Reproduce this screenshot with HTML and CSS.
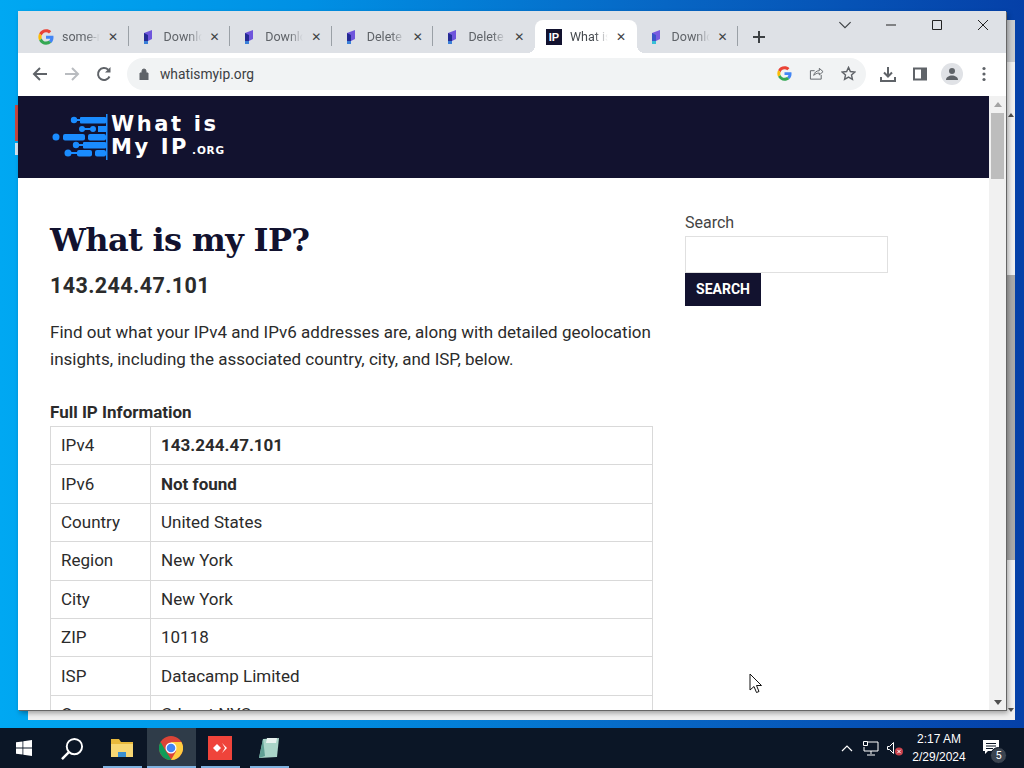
FILE: index.html
```html
<!DOCTYPE html>
<html lang="en">
<head>
    <meta charset="UTF-8">
    <title>What is my IP?</title>
    <link rel="stylesheet" href="styles.css">
</head>
<body>
    <div class="desktop">
        <div class="behind-sliver"></div>
        <div class="behind-window">
            <div class="behind-top"></div>
            <span class="behind-arrow up"></span>
            <div class="behind-thumb"></div>
            <span class="behind-arrow down"></span>
        </div>

        <div class="browser">
            <div class="tabstrip">
                <div class="tab">
                    <svg class="favicon" viewBox="0 0 48 48"><path fill="#ea4335" d="M24 10c3.500 0 6.600 1.200 9 3.500l6.700-6.700C35.600 3 30.200 1 24 1 15 1 7.300 6.100 3.500 13.600l7.800 6C13.200 14.100 18.100 10 24 10z"/><path fill="#4285f4" d="M46.500 24.500c0-1.600-.2-3.100-.4-4.500H24v9h12.700c-.6 2.900-2.200 5.400-4.700 7l7.600 5.900c4.400-4.100 6.900-10.100 6.900-17.400z"/><path fill="#fbbc05" d="M11.300 28.400C10.800 27 10.500 25.500 10.500 24s.3-3 .8-4.400l-7.800-6C1.900 16.800 1 20.300 1 24s.9 7.200 2.500 10.400l7.800-6z"/><path fill="#34a853" d="M24 47c6.200 0 11.500-2 15.600-5.600L32 35.500c-2.100 1.400-4.800 2.300-8 2.300-5.900 0-10.800-4-12.700-9.400l-7.800 6C7.300 41.900 15 47 24 47z"/></svg>
                    <span class="tab-title">some-r</span>
                    <span class="tab-close">✕</span>
                </div>
                <div class="tab">
                    <svg class="favicon" viewBox="0 0 16 16"><path fill="#6f55dc" d="M4 4l8-3v9l-4 2v3H4z"/><path fill="#252a94" d="M4 4l4 2v6H4z"/><path fill="#3a7fd8" d="M4 12h4v3H4z"/></svg>
                    <span class="tab-title">Downlo</span>
                    <span class="tab-close">✕</span>
                </div>
                <div class="tab">
                    <svg class="favicon" viewBox="0 0 16 16"><path fill="#6f55dc" d="M4 4l8-3v9l-4 2v3H4z"/><path fill="#252a94" d="M4 4l4 2v6H4z"/><path fill="#3a7fd8" d="M4 12h4v3H4z"/></svg>
                    <span class="tab-title">Downlo</span>
                    <span class="tab-close">✕</span>
                </div>
                <div class="tab">
                    <svg class="favicon" viewBox="0 0 16 16"><path fill="#6f55dc" d="M4 4l8-3v9l-4 2v3H4z"/><path fill="#252a94" d="M4 4l4 2v6H4z"/><path fill="#3a7fd8" d="M4 12h4v3H4z"/></svg>
                    <span class="tab-title">Delete</span>
                    <span class="tab-close">✕</span>
                </div>
                <div class="tab no-sep">
                    <svg class="favicon" viewBox="0 0 16 16"><path fill="#6f55dc" d="M4 4l8-3v9l-4 2v3H4z"/><path fill="#252a94" d="M4 4l4 2v6H4z"/><path fill="#3a7fd8" d="M4 12h4v3H4z"/></svg>
                    <span class="tab-title">Delete</span>
                    <span class="tab-close">✕</span>
                </div>
                <div class="tab active">
                    <span class="ip-favicon">IP</span>
                    <span class="tab-title">What is</span>
                    <span class="tab-close">✕</span>
                </div>
                <div class="tab">
                    <svg class="favicon" viewBox="0 0 16 16"><path fill="#7a5be0" d="M4 4l8-3v9l-4 2v3H4z"/><path fill="#3a55c8" d="M4 4l4 2v6H4z"/><path fill="#38c0d8" d="M4 12h4v3H4z"/></svg>
                    <span class="tab-title">Downlo</span>
                    <span class="tab-close">✕</span>
                </div>
                <svg class="new-tab" viewBox="0 0 14 14"><path d="M7 1v12M1 7h12" stroke="#3c4043" stroke-width="2" fill="none"/></svg>
                <div class="window-controls">
                    <svg class="tab-search" viewBox="0 0 12 8"><path d="M1 1l5 5 5-5" stroke="#3c4043" fill="none"/></svg>
                    <svg class="win-btn" viewBox="0 0 12 12"><path d="M1 6h10" stroke="#222" fill="none"/></svg>
                    <svg class="win-btn" viewBox="0 0 12 12"><path d="M1.500 1.500h9v9h-9z" stroke="#222" fill="none"/></svg>
                    <svg class="win-btn" viewBox="0 0 12 12"><path d="M1 1l10 10M11 1L1 11" stroke="#222" fill="none"/></svg>
                </div>
            </div>

            <div class="toolbar">
                <svg class="tool-icon" viewBox="0 0 16 16"><path d="M15 8H2M8 2L2 8l6 6" stroke="#5f6368" stroke-width="2" fill="none"/></svg>
                <svg class="tool-icon" viewBox="0 0 16 16"><path d="M1 8h13M8 2l6 6-6 6" stroke="#b9bcc0" stroke-width="2" fill="none"/></svg>
                <svg class="tool-icon" viewBox="0 0 16 16"><path d="M13.500 10.500A6 6 0 1 1 12.200 3.700" stroke="#5f6368" stroke-width="2" fill="none"/><path d="M14.500 1v5.500H9z" fill="#5f6368"/></svg>
                <div class="omnibox">
                    <svg class="lock" viewBox="0 0 10 12"><path d="M1 5h8v7H1zM3 5V3a2 2 0 0 1 4 0v2" fill="#5f6368" stroke="#5f6368"/></svg>
                    <span class="url">whatismyip.org</span>
                    <svg class="omni-icon" viewBox="0 0 48 48"><path fill="#ea4335" d="M24 10c3.500 0 6.600 1.200 9 3.500l6.700-6.700C35.600 3 30.200 1 24 1 15 1 7.300 6.100 3.500 13.600l7.800 6C13.200 14.100 18.100 10 24 10z"/><path fill="#4285f4" d="M46.500 24.500c0-1.600-.2-3.100-.4-4.500H24v9h12.700c-.6 2.900-2.200 5.400-4.700 7l7.600 5.900c4.400-4.100 6.900-10.100 6.900-17.400z"/><path fill="#fbbc05" d="M11.300 28.400C10.800 27 10.500 25.500 10.500 24s.3-3 .8-4.400l-7.800-6C1.900 16.800 1 20.300 1 24s.9 7.200 2.500 10.400l7.800-6z"/><path fill="#34a853" d="M24 47c6.200 0 11.500-2 15.600-5.600L32 35.500c-2.100 1.400-4.800 2.300-8 2.300-5.900 0-10.800-4-12.700-9.400l-7.800 6C7.300 41.900 15 47 24 47z"/></svg>
                    <svg class="omni-icon" viewBox="0 0 16 16"><path d="M13 9.500V14H1.500V5H6M5 10c.5-3 3-5 6-5V2.500L15 6l-4 3.500V7.500C8.500 7.500 6.500 8.500 5 10z" stroke="#5f6368" fill="none"/></svg>
                    <svg class="omni-icon" viewBox="0 0 16 16"><path d="M8 1.500l2 4.400 4.800.5-3.600 3.200 1 4.700L8 11.900l-4.200 2.400 1-4.700L1.200 6.400 6 5.900z" stroke="#5f6368" stroke-width="1.500" fill="none"/></svg>
                </div>
                <div class="tool-right">
                    <svg class="tool-icon" viewBox="0 0 16 16"><path d="M8 1v9M4 6.500L8 10.500l4-4M1 11v4h14v-4" stroke="#5f6368" stroke-width="2" fill="none"/></svg>
                    <svg class="tool-icon" viewBox="0 0 16 16"><path d="M2 2.500h12v11H2z" stroke="#5f6368" stroke-width="2" fill="none"/><path d="M9 2h5v12H9z" fill="#5f6368"/></svg>
                    <div class="avatar">
                        <svg viewBox="0 0 16 16"><circle cx="8" cy="5" r="3" fill="#5f6368"/><path d="M2 14c0-3 3-4.500 6-4.500s6 1.500 6 4.500z" fill="#5f6368"/></svg>
                    </div>
                    <svg class="tool-icon" viewBox="0 0 16 16"><circle cx="8" cy="2.500" r="1.600" fill="#5f6368"/><circle cx="8" cy="8" r="1.600" fill="#5f6368"/><circle cx="8" cy="13.500" r="1.600" fill="#5f6368"/></svg>
                </div>
            </div>

            <div class="viewport">
                <div class="page">
                    <header class="site-header">
                        <svg class="logo-mark" viewBox="0 0 56 48">
                            <g fill="#1a8cff">
                                <circle cx="22" cy="7" r="3.200"/><rect x="22" y="6" width="8" height="2"/><rect x="28" y="4" width="26" height="6.500" rx="1"/>
                                <circle cx="30" cy="16" r="3"/><circle cx="41" cy="16" r="3"/><rect x="30" y="15" width="11" height="2"/><rect x="46" y="13" width="8" height="6"/>
                                <circle cx="4" cy="24" r="3.500"/><rect x="11" y="21" width="22" height="6.500" rx="2"/><rect x="36" y="21" width="18" height="6.500" rx="2"/>
                                <circle cx="24" cy="32" r="3.200"/><rect x="24" y="31" width="8" height="2"/><rect x="31" y="29" width="23" height="6.500" rx="1"/>
                                <circle cx="16" cy="40" r="3.500"/><rect x="16" y="39" width="9" height="2"/><rect x="25" y="37" width="15" height="6.500" rx="2"/><rect x="43" y="37" width="11" height="6.500" rx="2"/>
                                <rect x="54" y="1" width="1.500" height="46"/>
                            </g>
                        </svg>
                        <div class="logo-text">
                            <div>What is</div>
                            <div>My IP<small>.ORG</small></div>
                        </div>
                    </header>
                    <div class="page-body">
                        <main class="content">
                            <h1>What is my IP?</h1>
                            <h2>143.244.47.101</h2>
                            <p class="intro">Find out what your IPv4 and IPv6 addresses are, along with detailed geolocation insights, including the associated country, city, and ISP, below.</p>
                            <h3>Full IP Information</h3>
                            <table class="ip-table">
                                <tr><td>IPv4</td><td><b>143.244.47.101</b></td></tr>
                                <tr><td>IPv6</td><td><b>Not found</b></td></tr>
                                <tr><td>Country</td><td>United States</td></tr>
                                <tr><td>Region</td><td>New York</td></tr>
                                <tr><td>City</td><td>New York</td></tr>
                                <tr><td>ZIP</td><td>10118</td></tr>
                                <tr><td>ISP</td><td>Datacamp Limited</td></tr>
                                <tr><td>Org</td><td>Cdnext NYC</td></tr>
                            </table>
                        </main>
                        <aside class="sidebar">
                            <label class="search-label" for="s">Search</label>
                            <input class="search-input" id="s" type="text">
                            <button class="search-btn">Search</button>
                        </aside>
                    </div>
                </div>
                <div class="scrollbar">
                    <span class="arrow up"></span>
                    <div class="thumb"></div>
                    <span class="arrow down"></span>
                </div>
            </div>
        </div>

        <svg class="cursor" viewBox="0 0 14 21"><path d="M1 1v16l4-3.500 2.500 6 2.500-1-2.500-6H12.500z" fill="#fff" stroke="#111"/></svg>

        <footer class="taskbar">
            <div class="task-slot"><svg class="start" viewBox="0 0 16 16"><path fill="#fff" d="M0 2.300l6.500-.9v6.200H0zM7.300 1.300L16 0v7.600H7.300zM0 8.400h6.500v6.200L0 13.700zM7.300 8.400H16V16l-8.700-1.300z"/></svg></div>
            <div class="task-slot"><svg class="search-glass" viewBox="0 0 24 24"><circle cx="14" cy="10" r="8" stroke="#fff" stroke-width="2" fill="none"/><path d="M8 16l-7 7" stroke="#fff" stroke-width="2.500"/></svg></div>
            <div class="task-slot running first">
                <svg class="app" viewBox="0 0 24 24"><path fill="#e8b93c" d="M1 3h8l2 3h12v15H1z"/><path fill="#f7d774" d="M1 8h22v13H1z"/><path fill="#3a8fd0" d="M8 16h8v5H8z"/></svg>
            </div>
            <div class="task-slot running active">
                <svg class="app" viewBox="0 0 24 24"><circle cx="12" cy="12" r="12" fill="#db4437"/><path fill="#0f9d58" d="M12 24A12 12 0 0 1 1.600 6L7 15.500l5.500 8.500z"/><path fill="#ffcd40" d="M12 6h10.400A12 12 0 0 1 12 24l5.200-9z"/><circle cx="12" cy="12" r="5.500" fill="#fff"/><circle cx="12" cy="12" r="4.300" fill="#4285f4"/></svg>
            </div>
            <div class="task-slot running">
                <svg class="app" viewBox="0 0 24 24"><path fill="#ef443b" d="M0 0h24v24H0z"/><path fill="#fff" d="M5 12l4-4 4 4-4 4zM14 7l5 5-5 5 3-5z"/></svg>
            </div>
            <div class="task-slot running">
                <svg class="app" viewBox="0 0 24 24"><path fill="#a9d4c8" d="M6 3l16-1-2 19-18 1z"/><path fill="#5f9f94" d="M6 3l-4 19 6-2z"/><path fill="#e8f2ef" d="M10 2h10l-1 5H9z"/></svg>
            </div>
            <div class="tray">
                <svg class="tray-chevron" viewBox="0 0 12 7"><path d="M1 6l5-5 5 5" stroke="#fff" fill="none" stroke-width="1.200"/></svg>
                <svg class="tray-net" viewBox="0 0 16 15"><path d="M4 1h11v9H1V6M8 10v3M4 14h8" stroke="#fff" fill="none"/><path d="M0.500 0.500h4v4h-4z" stroke="#fff" fill="#0b1626"/></svg>
                <svg class="tray-sound" viewBox="0 0 16 15"><path d="M0.500 5.500h2l4-4v11l-4-4h-2z" stroke="#fff" fill="none"/><circle cx="12" cy="10.500" r="4" fill="#c8404a"/><path d="M10.300 8.800l3.400 3.400M13.700 8.800l-3.400 3.400" stroke="#fff" fill="none"/></svg>
                <div class="clock"><div>2:17 AM</div><div>2/29/2024</div></div>
                <div class="notify">
                    <svg viewBox="0 0 16 14"><path fill="#fff" d="M0 0h16v11H5l-3 3v-3H0z"/><path stroke="#0b1626" d="M3 3.500h10M3 6h10M3 8.500h7"/></svg>
                    <span class="notify-count">5</span>
                </div>
            </div>
        </footer>
    </div>
</body>
</html>
```
FILE: styles.css
```css
* {
    box-sizing: border-box;
}

html, body {
    margin: 0;
    padding: 0;
    height: 768px;
    overflow: hidden;
}

body {
    font-family: Roboto, Arial, sans-serif;
}

.desktop {
    position: relative;
    width: 1024px;
    height: 768px;
    background: linear-gradient(90deg, #00a8f2 0%, #0090e4 30%, #0766c4 65%, #0540a8 100%);
}

/* bits of other windows showing around the browser */
.behind-sliver {
    position: absolute;
    left: 15px;
    top: 105px;
    width: 3px;
    height: 50px;
    background: linear-gradient(180deg, #c8473f 0, #c8473f 36px, #00a8f2 36px, #00a8f2 38px, #d5e4ee 38px);
}

.behind-window {
    position: absolute;
    left: 28px;
    top: 20px;
    width: 987px;
    height: 700px;
    background: #efefef;
}

.behind-top {
    height: 42px;
    background: #c9cbce;
}

.behind-thumb {
    position: absolute;
    right: 0;
    top: 255px;
    width: 8px;
    height: 285px;
    background: #a9a9a9;
}

.behind-arrow {
    position: absolute;
    right: 1px;
    width: 0;
    height: 0;
    border-left: 3px solid transparent;
    border-right: 3px solid transparent;
}

.behind-arrow.up {
    top: 93px;
    border-bottom: 4px solid #505050;
}

.behind-arrow.down {
    top: 688px;
    border-top: 4px solid #505050;
}

.browser {
    position: absolute;
    left: 18px;
    top: 11px;
    width: 988px;
    height: 699px;
    display: flex;
    flex-direction: column;
    background: #fff;
    box-shadow: 1px 1px 0 #666, 2px 3px 5px rgba(0, 0, 0, 0.35);
}

.tabstrip {
    height: 42px;
    flex: none;
    display: flex;
    align-items: flex-end;
    padding-left: 9px;
    background: #dee1e6;
}

.tab {
    position: relative;
    width: 101.600px;
    height: 33px;
    flex: none;
    display: flex;
    align-items: center;
    padding-left: 11px;
    color: #5f6368;
    font-size: 12.500px;
}

.tab::after {
    content: "";
    position: absolute;
    right: 0;
    top: 6px;
    width: 1px;
    height: 20px;
    background: #9aa0a6;
}

.tab.no-sep::after {
    display: none;
}

.tab.active {
    background: #fff;
    border-radius: 8px 8px 0 0;
    color: #45494e;
}

/* little flares where the active tab meets the toolbar */
.tab.active::before,
.tab.active::after {
    content: "";
    position: absolute;
    top: auto;
    bottom: 0;
    width: 8px;
    height: 8px;
    background: radial-gradient(circle at 0 0, transparent 8px, #fff 8px);
}

.tab.active::before {
    left: -8px;
}

.tab.active::after {
    right: -8px;
    background: radial-gradient(circle at 100% 0, transparent 8px, #fff 8px);
}

.favicon {
    width: 16px;
    height: 16px;
    flex: none;
}

.ip-favicon {
    width: 16px;
    height: 16px;
    flex: none;
    background: #12122f;
    color: #fff;
    font: bold 11px/16px "Liberation Sans", sans-serif;
    text-align: center;
}

.tab-title {
    flex: none;
    width: 44px;
    margin-left: 8px;
    white-space: nowrap;
    -webkit-mask-image: linear-gradient(90deg, #000 55%, transparent 86%);
    mask-image: linear-gradient(90deg, #000 55%, transparent 86%);
}

.tab-close {
    flex: none;
    width: 12px;
    margin-left: 1px;
    color: #3c4043;
    font: bold 12px/12px "DejaVu Sans", sans-serif;
    text-align: center;
}

.new-tab {
    width: 14px;
    height: 14px;
    flex: none;
    margin: 0 0 9px 14px;
}

.window-controls {
    margin-left: auto;
    align-self: flex-start;
    display: flex;
    align-items: center;
    padding: 8px 17px 0 0;
}

.tab-search {
    width: 14px;
    height: 9px;
    margin-right: -1px;
}

.win-btn {
    width: 12px;
    height: 12px;
    margin-left: 34px;
}

.toolbar {
    height: 43px;
    flex: none;
    display: flex;
    align-items: center;
    padding: 0 14px 2px 14px;
    background: #fff;
}

.tool-icon {
    width: 16px;
    height: 16px;
    flex: none;
    margin-right: 16px;
}

.omnibox {
    flex: 0 0 739px;
    height: 32px;
    margin-left: -1px;
    display: flex;
    align-items: center;
    padding: 0 10px 0 12px;
    background: #f1f3f4;
    border-radius: 16px;
}

.lock {
    width: 10px;
    height: 12px;
    flex: none;
}

.url {
    margin-left: 11px;
    color: #3c4043;
    font-size: 13.800px;
    flex: 1;
}

.omni-icon {
    width: 15px;
    height: 15px;
    flex: none;
    margin-left: 17px;
}

.tool-right {
    display: flex;
    align-items: center;
    margin-left: 14px;
}

.avatar {
    width: 22px;
    height: 22px;
    margin: 0 13px 0 -3px;
    padding: 3px;
    border-radius: 50%;
    background: #e0e2e6;
}

.avatar svg {
    display: block;
}

.tool-right .tool-icon:last-child {
    margin-right: 0;
}

.viewport {
    flex: 1;
    min-height: 0;
    display: flex;
}

.page {
    flex: 1;
    min-width: 0;
    overflow: hidden;
    color: #2b2b2b;
}

.site-header {
    height: 82px;
    display: flex;
    align-items: center;
    padding-left: 34px;
    background: #12122f;
}

.logo-mark {
    width: 56px;
    height: 48px;
    flex: none;
}

.logo-text {
    margin: 0 0 0 3px;
    color: #fff;
    font: bold 21px/23px "DejaVu Sans", sans-serif;
    letter-spacing: 2.600px;
}

.logo-text small {
    margin-left: 3px;
    font-size: 10.500px;
    letter-spacing: 0.800px;
}

.page-body {
    display: flex;
    padding: 0 0 0 32px;
}

.content {
    width: 603px;
    flex: none;
}

h1 {
    margin: 39px 0 0;
    color: #12122f;
    font: bold 32px/46px "DejaVu Serif", serif;
    letter-spacing: -0.650px;
}

h2 {
    margin: 8px 0 0;
    font-size: 21.500px;
    line-height: 30px;
    font-weight: 700;
    letter-spacing: 0.400px;
}

.intro {
    margin: 18px 0 0;
    font-size: 17px;
    line-height: 27px;
}

h3 {
    margin: 28px 0 0;
    font-size: 17px;
    line-height: 22px;
    font-weight: 700;
}

.ip-table {
    width: 603px;
    margin-top: 3px;
    border-collapse: collapse;
    font-size: 17px;
}

.ip-table td {
    height: 38.400px;
    padding: 0 10px 1px;
    border: 1px solid #d9d9d9;
}

.ip-table td:first-child {
    width: 100px;
}

.ip-table b {
    font-weight: 700;
}

.sidebar {
    width: 202px;
    margin: 33px 0 0 32px;
    display: flex;
    flex-direction: column;
    align-items: flex-start;
}

.search-label {
    font-size: 16px;
    line-height: 24px;
    color: #444;
}

.search-input {
    width: 203px;
    height: 37px;
    margin-top: 1px;
    border: 1px solid #e0e0e0;
    background: #fff;
}

.search-btn {
    width: 76px;
    height: 33px;
    padding: 0 0 2px;
    border: none;
    background: #12122f;
    color: #fff;
    font: bold 14px Roboto, sans-serif;
    text-transform: uppercase;
}

.scrollbar {
    width: 17px;
    flex: none;
    display: flex;
    flex-direction: column;
    align-items: center;
    background: #f1f1f1;
}

.arrow {
    flex: none;
    width: 0;
    height: 0;
    border-left: 4px solid transparent;
    border-right: 4px solid transparent;
}

.arrow.up {
    margin-top: 6px;
    border-bottom: 5px solid #a3a3a3;
}

.arrow.down {
    margin: auto 0 5px;
    border-top: 5px solid #505050;
}

.thumb {
    width: 13px;
    height: 66px;
    margin-top: 6px;
    background: #bdbdbd;
}

.cursor {
    position: absolute;
    left: 749px;
    top: 673px;
    width: 14px;
    height: 21px;
}

.taskbar {
    position: absolute;
    left: 0;
    right: 0;
    bottom: 0;
    height: 40px;
    display: flex;
    background: #0b1626;
}

.task-slot {
    width: 48px;
    height: 40px;
    flex: none;
    display: flex;
    align-items: center;
    justify-content: center;
    position: relative;
}

.task-slot.running {
    width: 49px;
}

.task-slot.first {
    margin-left: 1.500px;
}

.task-slot.running::after {
    content: "";
    position: absolute;
    left: 5px;
    right: 5px;
    bottom: 0;
    height: 2px;
    background: #7fb2e0;
}

.task-slot.active {
    background: #2f3c49;
}

.task-slot.active::after {
    left: 0;
    right: 0;
}

.start {
    width: 16px;
    height: 16px;
}

.search-glass {
    width: 23px;
    height: 23px;
}

.app {
    width: 24px;
    height: 24px;
}

.tray {
    margin-left: auto;
    display: flex;
    align-items: center;
    padding-right: 11px;
    color: #fff;
}

.tray-chevron {
    width: 12px;
    height: 7px;
    margin-right: 10px;
}

.tray-net {
    width: 16px;
    height: 15px;
    margin-right: 8px;
}

.tray-sound {
    width: 16px;
    height: 15px;
    margin-top: 1px;
}

.clock {
    width: 76px;
    margin-left: -2px;
    text-align: center;
    font-family: "Liberation Sans", sans-serif;
    font-size: 12px;
    line-height: 18px;
}

.notify {
    position: relative;
    width: 40px;
    height: 40px;
    margin-left: -4px;
}

.notify svg {
    position: absolute;
    left: 10px;
    top: 12px;
    width: 16px;
    height: 14px;
}

.notify-count {
    position: absolute;
    left: 17px;
    top: 19px;
    width: 17px;
    height: 17px;
    border-radius: 50%;
    background: #3b4450;
    border: 1px solid #0b1626;
    font-size: 11px;
    line-height: 15px;
    text-align: center;
}
```
